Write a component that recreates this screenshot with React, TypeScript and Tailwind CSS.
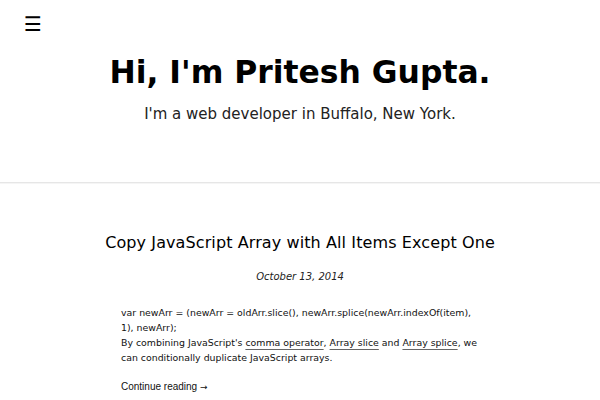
export default function App() {
  return (
    <div className="min-h-screen bg-white text-[#111]" style={{ fontFamily: '"DejaVu Sans", sans-serif' }}>
      <header className="relative pb-[58px]">
        <button className="absolute left-[24px] top-[14px] text-[20px] leading-none text-black">☰</button>
        <div className="flex flex-col items-center pt-[52px]">
          <h1 className="text-[31.4px] font-bold leading-[40px] text-black">Hi, I'm Pritesh Gupta.</h1>
          <p className="mt-[12px] text-[15px] leading-[20px] text-[#222]">I'm a web developer in Buffalo, New York.</p>
        </div>
      </header>
      <div className="h-[1px] bg-[#e6e6e6]" />
      <div className="h-[1px] bg-[#f5f5f5]" />
      <main className="flex flex-col items-center pt-[48px]">
        <h2 className="text-[16px] leading-[22px] tracking-[0.1px] text-black">Copy JavaScript Array with All Items Except One</h2>
        <p className="mt-[15px] text-[10px] italic text-[#222]">October 13, 2014</p>
        <div className="mt-[21px] w-[358px] text-[9.4px] leading-[15px] text-[#111]">
          <p>var newArr = (newArr = oldArr.slice(), newArr.splice(newArr.indexOf(item), 1), newArr);</p>
          <p>
            By combining JavaScript's{" "}
            <a className="inline-block underline decoration-[#666] underline-offset-[3px]">comma operator</a>,{" "}
            <a className="inline-block underline decoration-[#666] underline-offset-[3px]">Array slice</a> and{" "}
            <a className="inline-block underline decoration-[#666] underline-offset-[3px]">Array splice</a>, we can
            conditionally duplicate JavaScript arrays.
          </p>
          <p className="mt-[14px] text-[10px]" style={{ fontFamily: '"Liberation Sans", sans-serif' }}>
            Continue reading{" "}
            <span className="text-[9px]" style={{ fontFamily: '"DejaVu Sans", sans-serif' }}>
              →
            </span>
          </p>
        </div>
      </main>
    </div>
  );
}
